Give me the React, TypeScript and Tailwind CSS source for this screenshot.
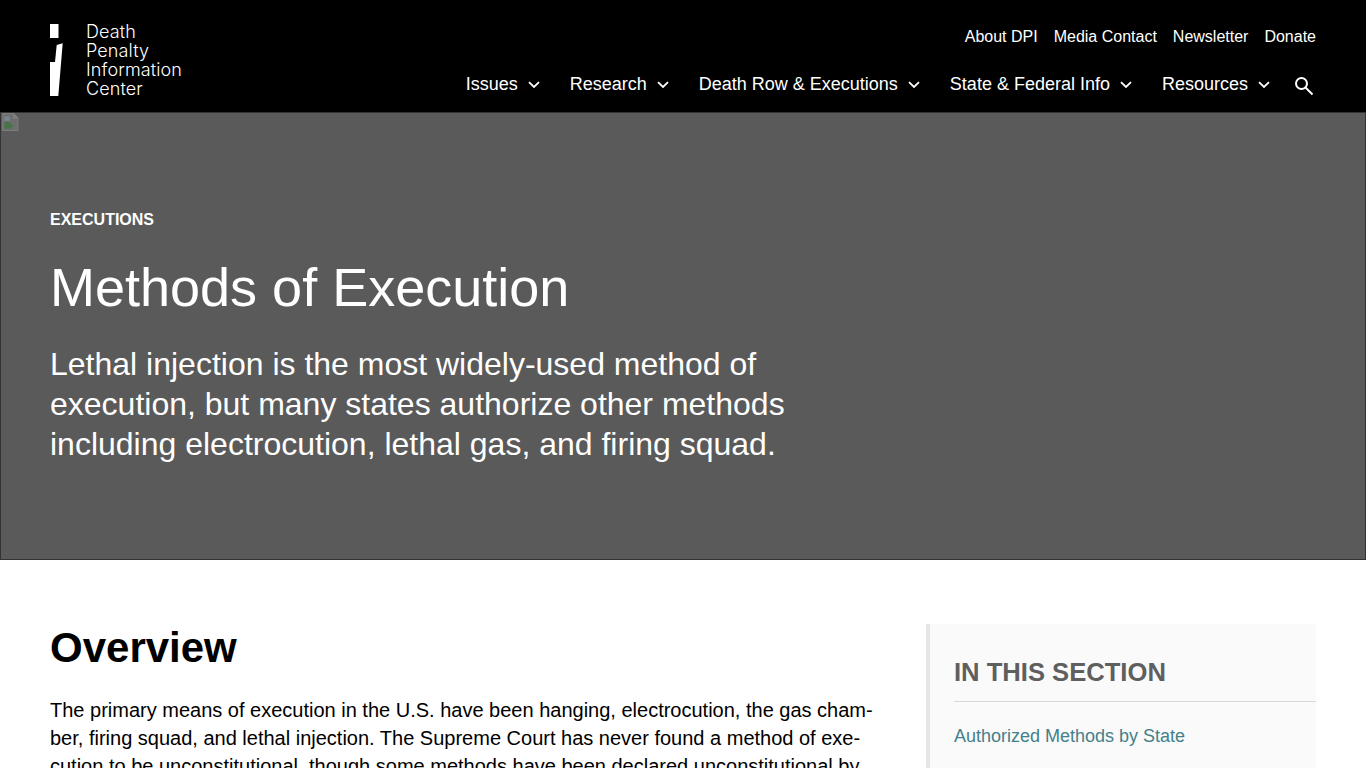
import React from 'react';

const navItems = ['Issues', 'Research', 'Death Row & Executions', 'State & Federal Info', 'Resources'];
const topLinks = ['About DPI', 'Media Contact', 'Newsletter', 'Donate'];

const Chevron = () => (
  <svg width="12" height="8" viewBox="0 0 12 8" fill="none" stroke="white" strokeWidth="1.8" className="ml-[10px] mt-[2px]">
    <path d="M1 1.2 L6 6 L11 1.2" />
  </svg>
);

const Logo = () => (
  <div className="flex items-start">
    <svg width="13" height="72" viewBox="0 0 13 72" fill="white" className="mt-[24px]">
      <rect x="0" y="0" width="8.5" height="14" />
      <path d="M6.7 21 L12.7 19.3 L8.3 72 L0 72 L0 38 L5 38 Z" />
    </svg>
    <div className="ml-[23px] mt-[22px] font-['Inter',sans-serif] text-[18px] font-light leading-[19px] tracking-[0.1px] text-white">
      <div>Death</div>
      <div>Penalty</div>
      <div>Information</div>
      <div>Center</div>
    </div>
  </div>
);

export default function App() {
  return (
    <div className="h-[768px] overflow-hidden bg-white font-['Liberation_Sans',Arial,sans-serif] text-black">
      <header className="flex h-[112px] justify-between bg-black pl-[50px] pr-[50px] text-white">
        <Logo />
        <div className="flex flex-col items-end">
          <nav className="mt-[27px] flex gap-4 text-[16px] leading-5">
            {topLinks.map((link) => (
              <a key={link}>{link}</a>
            ))}
          </nav>
          <nav className="mt-[25px] flex items-center gap-[30px] text-[18px] leading-6">
            {navItems.map((item) => (
              <a key={item} className="flex items-center">
                {item}
                <Chevron />
              </a>
            ))}
            <svg width="20" height="20" viewBox="0 0 20 20" fill="none" stroke="white" strokeWidth="2" className="-ml-[6px] mr-[2px] mt-[3px]">
              <circle cx="7.5" cy="7.5" r="5.5" />
              <path d="M11.5 11.5 L18.5 18.5" />
            </svg>
          </nav>
        </div>
      </header>

      <section className="relative h-[448px] border border-[#333] bg-[#5a5a5a] pl-[49px] text-white">
        {/* broken hero image marker */}
        <svg width="18" height="18" viewBox="0 0 16 16" className="absolute left-0 top-0 opacity-40">
          <path d="M1.5 0.5 H11 L15 4.5 V15.5 H1.5 Z" fill="#8c8c8c" stroke="#b0b0b0" />
          <path d="M11 0.5 V4.5 H15" fill="#bbb" stroke="#b0b0b0" />
          <path d="M3 14 V9 L6 7 L11 11 L8 14 Z" fill="#2f9a2f" />
          <path d="M3 3 H8 V7 H3 Z" fill="#a9c4e8" />
        </svg>
        <p className="mt-[97px] text-[16px] font-bold leading-5">EXECUTIONS</p>
        <h1 className="mt-[27px] text-[54px] leading-[60px]">Methods of Execution</h1>
        <p className="mt-[27px] w-[780px] text-[32px] leading-10">
          Lethal injection is the most widely-used method of execution, but many states authorize other methods including electrocution, lethal gas, and firing squad.
        </p>
      </section>

      <main className="flex justify-between px-[50px] pt-[64px]">
        <article className="w-[824px]">
          <h2 className="text-[42px] font-bold leading-[48px]">Overview</h2>
          <p className="mt-[24px] text-[20px] leading-[28px]">
            The primary means of execution in the U.S. have been hanging, electrocution, the gas cham&shy;ber, firing squad, and lethal injection. The Supreme Court has never found a method of exe&shy;cution to be unconstitutional, though some methods have been declared unconstitutional by state courts.
          </p>
        </article>
        <aside className="h-[400px] w-[390px] border-l-4 border-[#e6e6e6] bg-[#fafafa] pl-[24px] pt-[29px]">
          <h3 className="text-[25.6px] font-bold leading-[38px] text-[#5f5f5f]">IN THIS SECTION</h3>
          <div className="mt-[10px] border-t border-[#d8d8d8] pt-[22px] text-[18px] leading-6 text-[#44808a]">
            Authorized Methods by State
          </div>
        </aside>
      </main>
    </div>
  );
}
